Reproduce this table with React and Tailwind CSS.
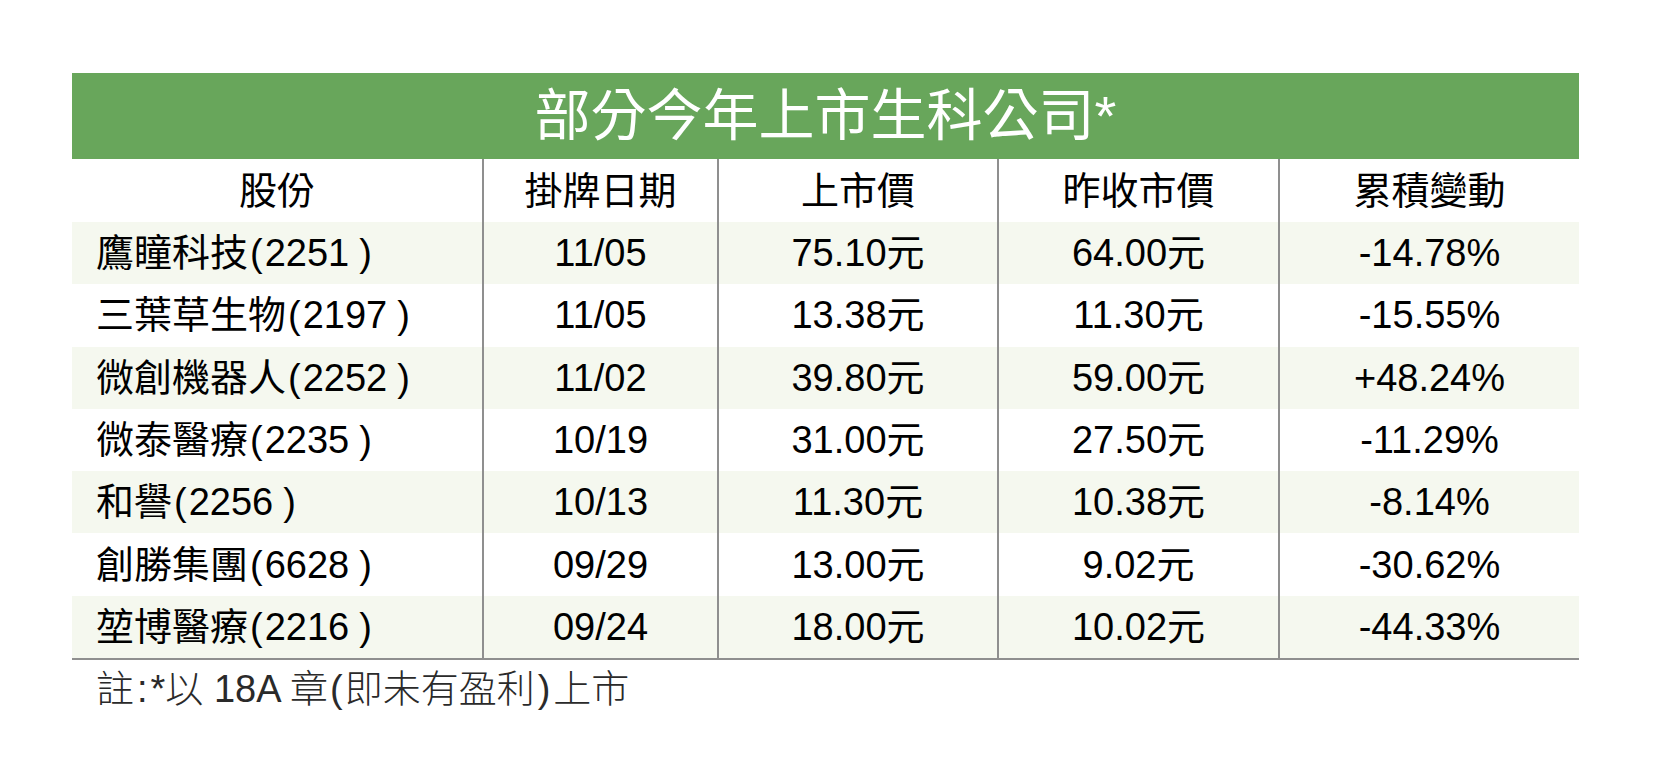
import React from "react";

const rows = [
  { name: "鷹瞳科技", code: "2251", date: "11/05", ipo: "75.10元", close: "64.00元", change: "-14.78%" },
  { name: "三葉草生物", code: "2197", date: "11/05", ipo: "13.38元", close: "11.30元", change: "-15.55%" },
  { name: "微創機器人", code: "2252", date: "11/02", ipo: "39.80元", close: "59.00元", change: "+48.24%" },
  { name: "微泰醫療", code: "2235", date: "10/19", ipo: "31.00元", close: "27.50元", change: "-11.29%" },
  { name: "和譽", code: "2256", date: "10/13", ipo: "11.30元", close: "10.38元", change: "-8.14%" },
  { name: "創勝集團", code: "6628", date: "09/29", ipo: "13.00元", close: "9.02元", change: "-30.62%" },
  { name: "堃博醫療", code: "2216", date: "09/24", ipo: "18.00元", close: "10.02元", change: "-44.33%" },
];

const headers = ["股份", "掛牌日期", "上市價", "昨收市價", "累積變動"];

const fontStack = { fontFamily: '"Liberation Sans", "Noto Sans CJK TC", sans-serif' };

const App = () => {
  return (
    <div className="w-[1653px] h-[765px] bg-white pt-[73px] pl-[72px] text-black" style={fontStack}>
      <div className="w-[1507px]">
        <div className="h-[86px] bg-[#68a65b] flex items-center justify-center text-white text-[56px] leading-none">
          部分今年上市生科公司*
        </div>

        <div className="grid grid-cols-[410px_235px_280px_281px_301px] text-[38px] leading-none border-b-2 border-[#8f8f8f]">
          {headers.map((h, i) => (
            <div
              key={h}
              className={`h-[63px] flex items-center justify-center ${i > 0 ? "border-l-2 border-[#8f8f8f]" : ""}`}
            >
              {h}
            </div>
          ))}

          {rows.map((r, idx) => {
            const bg = idx % 2 === 0 ? "bg-[#f5f8ef]" : "bg-white";
            return (
              <React.Fragment key={r.code}>
                <div className={`h-[62.3px] flex items-center pl-[24px] whitespace-nowrap ${bg}`}>
                  {r.name}
                  <span className="ml-[2px] mr-[2px]">(</span>
                  {r.code}
                  <span className="ml-[10px]">)</span>
                </div>
                <div className={`h-[62.3px] flex items-center justify-center border-l-2 border-[#8f8f8f] ${bg}`}>{r.date}</div>
                <div className={`h-[62.3px] flex items-center justify-center border-l-2 border-[#8f8f8f] ${bg}`}>{r.ipo}</div>
                <div className={`h-[62.3px] flex items-center justify-center border-l-2 border-[#8f8f8f] ${bg}`}>{r.close}</div>
                <div className={`h-[62.3px] flex items-center justify-center border-l-2 border-[#8f8f8f] ${bg}`}>{r.change}</div>
              </React.Fragment>
            );
          })}
        </div>

        <div className="h-[58px] flex items-center pl-[24px] text-[38px] leading-none font-light text-[#2a2a2a] whitespace-nowrap">
          註<span className="mx-[3px]">:</span>*以 18A 章<span className="mx-[2px]">(</span>即未有盈利<span className="mx-[3px]">)</span>上市
        </div>
      </div>
    </div>
  );
};

export default App;
